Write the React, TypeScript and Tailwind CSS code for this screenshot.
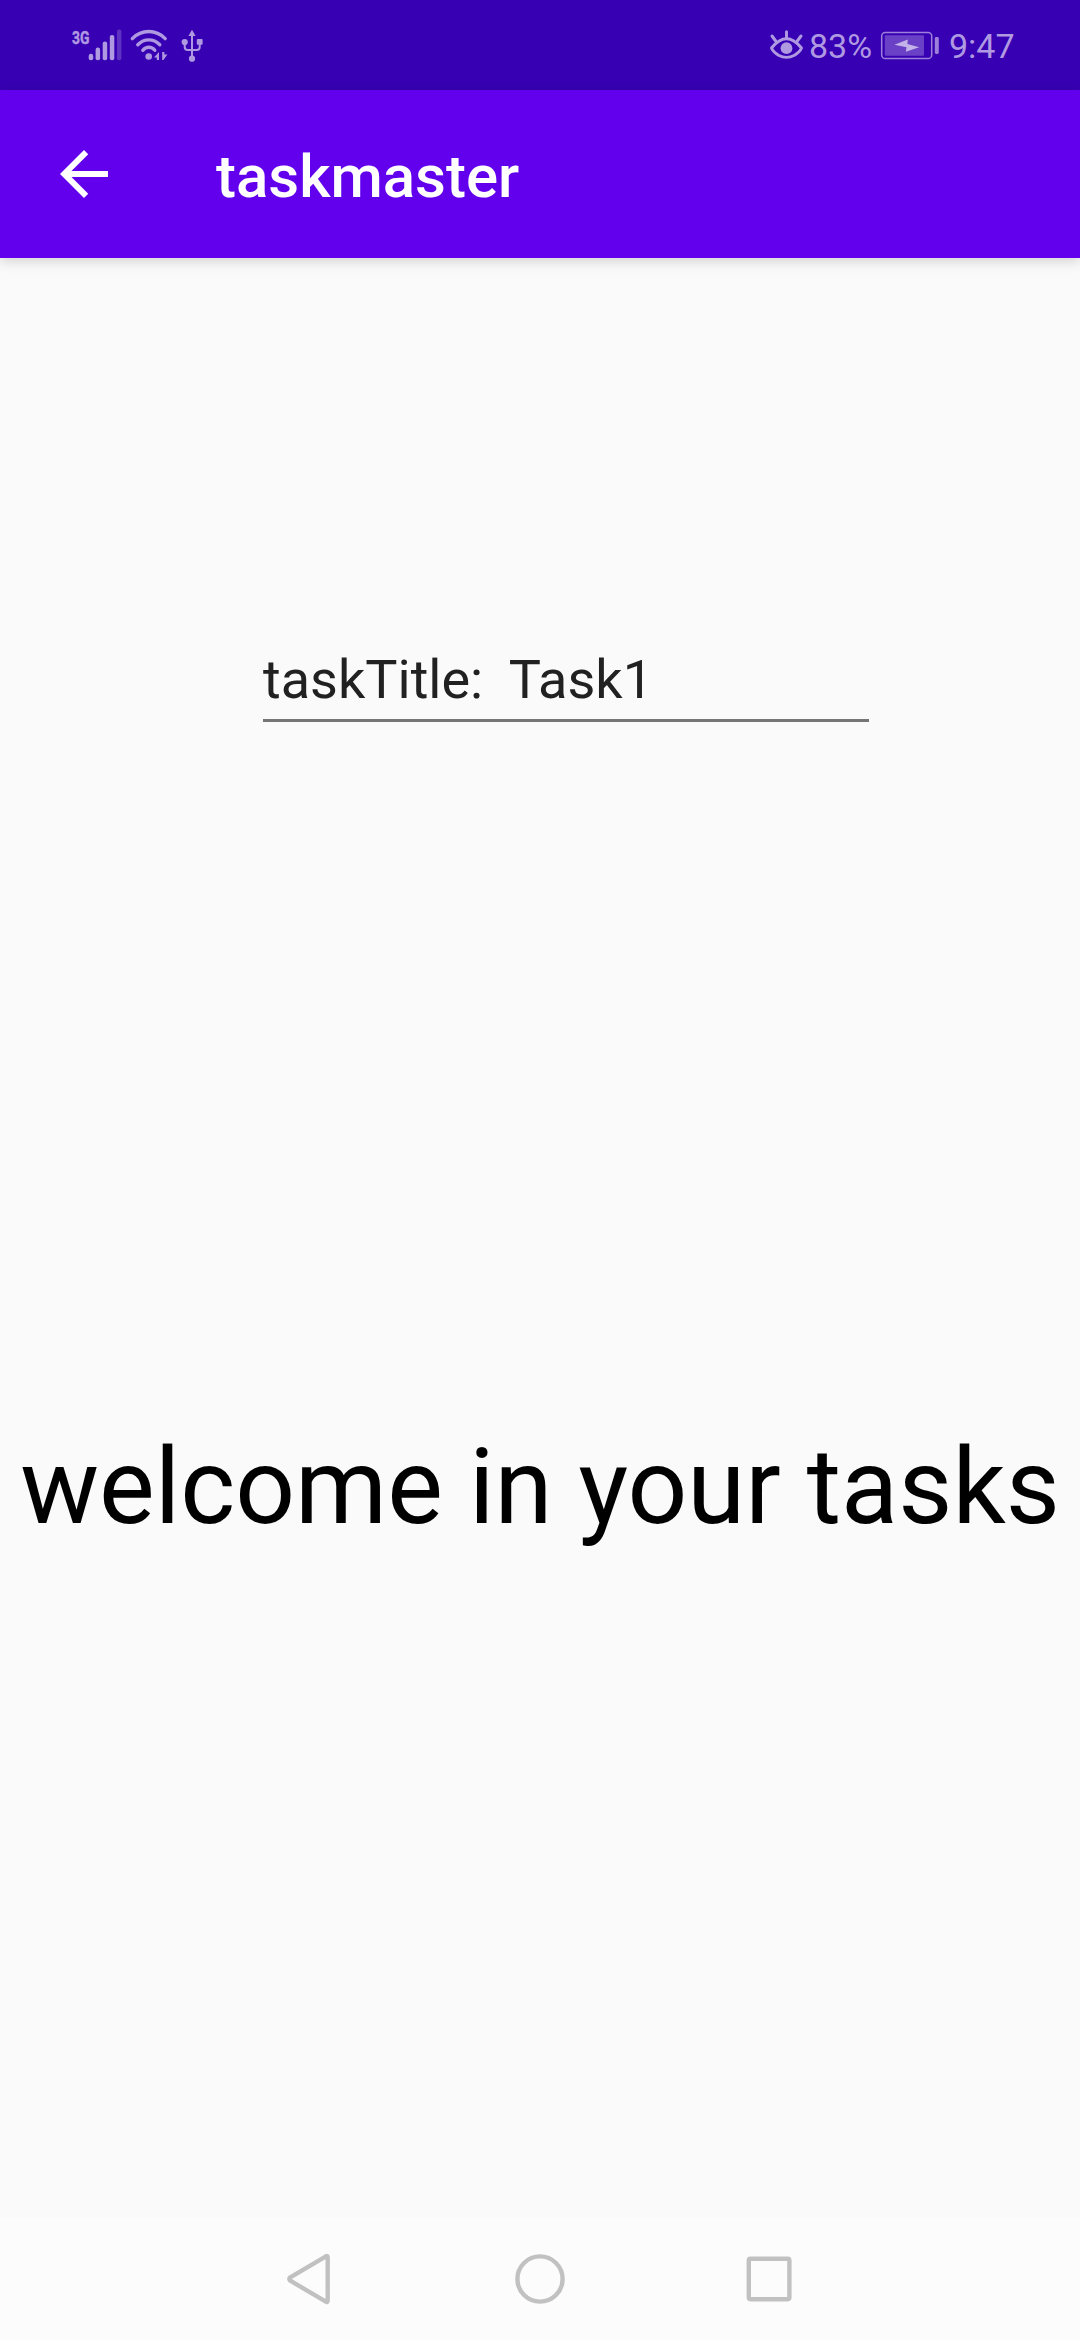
import React from "react";

function SystemIcons() {
  return (
    <svg className="h-[90px] w-[150px]" viewBox="60 0 150 90" fill="none">
      <g fill="#af99e1">
        <rect x="88.7" y="53.8" width="4.5" height="6.5" rx="2.1" />
        <rect x="95.6" y="47.6" width="4.5" height="12.7" rx="2.1" />
        <rect x="102.7" y="41.4" width="4.5" height="18.9" rx="2.1" />
        <rect x="109.8" y="35" width="4.5" height="25.3" rx="2.1" />
        <rect x="117" y="29.5" width="4.4" height="30.8" rx="2" fill="#5f33c2" />
        <circle cx="148.7" cy="56.5" r="3.3" />
        <path d="M159 52v8h-2.2v-2.4H154z" />
        <path d="M162.2 52h2.2v2.4h3l-4 5.6h-1.2z" />
      </g>
      <g stroke="#af99e1" strokeWidth="3.4" strokeLinecap="round">
        <path d="M132.3 38.6C141.5 29.2 156 29.2 165.2 38.6" />
        <path d="M137.8 44.7C144.2 38.3 153.4 38.3 159.8 44.7" />
        <path d="M142.8 50.3C146.2 46.3 151.6 46.3 154.8 50.3" />
      </g>
      <g fill="#af99e1">
        <path d="M192 29.7l3.6 6.3h-7.2z" />
        <circle cx="192" cy="58.7" r="3.1" />
        <circle cx="184.7" cy="42" r="3.1" />
        <rect x="196.8" y="39" width="5.8" height="5.8" rx="1" />
      </g>
      <path
        d="M192 34v24M184.7 42v5q0 3 3 3h9q3 0 3-3V42"
        stroke="#af99e1"
        strokeWidth="2"
      />
      <text
        x="72"
        y="43.6"
        fill="#af99e1"
        stroke="#af99e1"
        strokeWidth="0.5"
        fontFamily="Roboto, sans-serif"
        fontWeight="700"
        fontSize="19"
        textLength="17.4"
        lengthAdjust="spacingAndGlyphs"
      >
        3G
      </text>
    </svg>
  );
}

function EyeIcon() {
  return (
    <svg className="h-[90px] w-[36px]" viewBox="769 0 36 90" fill="none" stroke="#af99e1" strokeWidth="3" strokeLinecap="round">
      <path d="M771.5 48Q786.5 29.5 801.5 48Q800.2 51.5 794.5 55.2Q786.5 59.5 778.5 55.2Q772.8 51.5 771.5 48z" strokeLinejoin="round" strokeWidth="2.9" />
      <path d="M786.5 31.8v6M772 36l3.7 5M801 36l-3.7 5" />
      <circle cx="786.5" cy="48.2" r="5.9" fill="#af99e1" stroke="none" />
    </svg>
  );
}

function BatteryIcon() {
  return (
    <svg className="h-[90px] w-[60px]" viewBox="880 0 60 90" fill="none">
      <rect x="881.7" y="32.5" width="50" height="26" rx="3.6" stroke="#9c80d9" strokeWidth="1.5" />
      <rect x="884.8" y="35.2" width="39.2" height="20.6" rx="1" fill="#6a40c6" />
      <rect x="934.8" y="37" width="4" height="17" rx="1.4" fill="#9c80d9" />
      <path d="M894.4 44.8l13.4-5.2-.4 4.3 11.8 3.4-13.4 4.4.7-4.5z" fill="#c3b3e8" />
    </svg>
  );
}

function StatusBar() {
  return (
    <header className="flex h-[90px] items-center bg-[#3700b3] pl-[60px] text-[34px] leading-none text-[#af99e1]">
      <SystemIcons />
      <div className="ml-[559px] flex items-center">
        <EyeIcon />
        <span className="ml-1 w-[71px] pt-0.5 whitespace-nowrap">83%</span>
        <BatteryIcon />
        <span className="ml-[9px] pt-0.5 whitespace-nowrap">9:47</span>
      </div>
    </header>
  );
}

function AppBar() {
  return (
    <div className="z-10 flex h-[168px] items-center bg-[#6200ee] pl-12 shadow-[0_3px_12px_rgba(0,0,0,0.17)]">
      <button aria-label="Back" className="h-[72px] w-[72px]">
        <svg className="h-[72px] w-[72px]" viewBox="0 0 24 24" fill="#fff">
          <path d="M20 11H7.83l5.59-5.59L12 4l-8 8 8 8 1.41-1.41L7.83 13H20z" />
        </svg>
      </button>
      <h1 className="ml-24 pt-1.5 text-[60px] leading-[72px] font-medium text-white">taskmaster</h1>
    </div>
  );
}

function NavBar() {
  return (
    <nav className="flex h-[122px] items-center justify-center bg-[#fcfcfc]">
      <svg className="h-[122px] w-[560px]" viewBox="260 2218 560 122" fill="none" stroke="#c1c1c1" strokeWidth="4.4" strokeLinejoin="round">
        <path d="M325.9 2256.3q1.8-.8 1.8 1.2v43q0 2-1.8 1.2l-35.6-21q-2-1.7 0-3.4z" />
        <circle cx="540" cy="2279" r="22.6" />
        <rect x="748.8" y="2258.8" width="40.6" height="40.4" rx="1.6" />
      </svg>
    </nav>
  );
}

export default function App() {
  return (
    <div className="flex h-[2340px] w-[1080px] flex-col overflow-hidden bg-[#fafafa] font-['Roboto',sans-serif]">
      <StatusBar />
      <AppBar />
      <main className="flex flex-1 flex-col">
        <div className="mt-[390px] ml-[263px] h-[74px] w-[606px] border-b-3 border-[#757575] text-[54px] leading-[64px] whitespace-pre text-[#212121]">
          {"taskTitle:  Task1"}
        </div>
        <p className="mt-[704px] text-center text-[105px] leading-[124px] whitespace-nowrap text-black">
          welcome in your tasks
        </p>
      </main>
      <NavBar />
    </div>
  );
}
